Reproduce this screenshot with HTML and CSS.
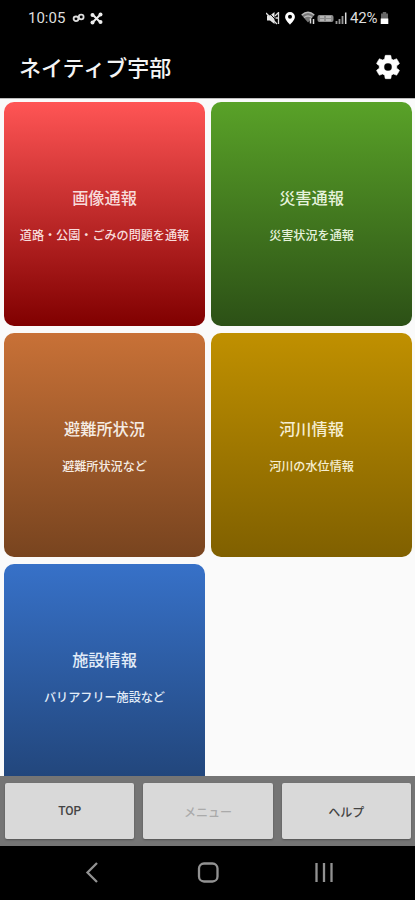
FILE: index.html
```html
<!DOCTYPE html>
<html lang="ja">
<head>
<meta charset="utf-8">
<title>ネイティブ宇部</title>
<link rel="stylesheet" href="styles.css">
</head>
<body>
<div class="app">
  <div class="status">
    <span class="clock">10:05</span>
    <svg class="link" width="14" height="12" viewBox="0 0 14 12" fill="none" stroke="#ddd" stroke-width="1.8"><ellipse cx="4" cy="6.800" rx="2.400" ry="2.300"/><ellipse cx="9.200" cy="5" rx="2.400" ry="2.300"/></svg>
    <svg class="cross" width="13" height="13" viewBox="0 0 13 13" fill="none" stroke="#eee"><path stroke-width="2" d="M2.500 2.500l8 8M10.500 2.500l-8 8"/><g fill="#eee" stroke="none"><circle cx="2.500" cy="3" r="2"/><circle cx="10.500" cy="2.500" r="2"/><circle cx="2.500" cy="10.500" r="2"/><circle cx="10.500" cy="10" r="2"/></g></svg>
    <div class="indicators">
      <svg class="mute" width="14" height="14" viewBox="0 0 14 14"><path fill="#e6e6e6" d="M1 4.500h3L8.500 1v12L4 9.500H1z"/><path d="M1.500 0l11 12" stroke="#000" stroke-width="1"/><path d="M0 2l11 11M9 5l3-3M9.500 7h2.500M12.500 1v12" stroke="#ddd" stroke-width="1.300"/></svg>
      <svg class="pin" width="12" height="14" viewBox="0 0 12 14"><path fill="#fff" fill-rule="evenodd" d="M6 1a4.900 4.900 0 0 0-4.900 4.900C1.100 9 6 13.500 6 13.500S10.900 9 10.900 5.900A4.900 4.900 0 0 0 6 1zm0 2.800a2 2 0 1 1 0 4 2 2 0 0 1 0-4z"/></svg>
      <svg class="wifi" width="15" height="14" viewBox="0 0 15 14"><path fill="#777" d="M.5 4Q7-1.500 13.500 4L7 11.500z"/><path fill="none" stroke="#bbb" stroke-width="1.300" d="M.7 4Q7-1.500 13.300 4M3 6.500q4-3 8 0"/><path fill="none" stroke="#ddd" stroke-width="1.500" d="M9.500 7.500v5M12.500 13V8"/></svg>
      <svg class="volte" width="17" height="9" viewBox="0 0 17 9"><rect x=".5" y="1" width="16" height="7" rx="2" fill="#8d8d8d"/><path d="M3 3h4M3 6h4M9 3h5M9 6h5" stroke="#ddd" stroke-width="1"/></svg>
      <svg class="signal" width="12" height="12" viewBox="0 0 12 12"><path d="M1.500 12V9M4.500 12V7M7.500 12V4" stroke="#999" stroke-width="1.800"/><path d="M10.700 12V.5" stroke="#ddd" stroke-width="1.500"/></svg>
      <span class="percent">42%</span>
      <svg class="battery" width="9" height="13" viewBox="0 0 9 13"><path fill="#666" d="M2.800 0h3.400v1.500H8V7H1V1.500h1.800z"/><path fill="#fff" d="M.7 6.500h7.600V12H.7z"/></svg>
    </div>
  </div>
  <header class="bar">
    <h1>ネイティブ宇部</h1>
    <svg class="gear" width="28" height="28" viewBox="0 0 24 24"><path fill="#fff" stroke="#fff" stroke-width=".5" d="M19.430 12.980c.04-.32.070-.64.070-.98s-.03-.66-.07-.98l2.110-1.650c.19-.15.240-.42.120-.64l-2-3.460c-.12-.22-.39-.3-.61-.22l-2.490 1c-.52-.4-1.080-.73-1.690-.98l-.38-2.650A.488.488 0 0 0 14 2h-4c-.25 0-.46.180-.49.420l-.38 2.650c-.61.250-1.170.590-1.690.980l-2.490-1c-.23-.09-.49 0-.61.220l-2 3.460c-.13.220-.07.490.120.640l2.110 1.650c-.04.320-.07.650-.07.980s.03.660.070.980l-2.110 1.650c-.19.150-.24.420-.12.640l2 3.460c.12.220.39.300.61.220l2.490-1c.52.400 1.080.730 1.690.980l.38 2.650c.03.240.24.420.49.420h4c.25 0 .46-.18.490-.42l.38-2.650c.61-.25 1.170-.59 1.690-.98l2.490 1c.23.090.49 0 .61-.22l2-3.460c.12-.22.070-.49-.12-.64zM12 15.500a3.500 3.500 0 1 1 0-7 3.500 3.500 0 0 1 0 7z"/></svg>
  </header>
  <main class="grid">
    <section class="card red"><h2>画像通報</h2><p>道路・公園・ごみの問題を通報</p></section>
    <section class="card green"><h2>災害通報</h2><p>災害状況を通報</p></section>
    <section class="card brown"><h2>避難所状況</h2><p>避難所状況など</p></section>
    <section class="card gold"><h2>河川情報</h2><p>河川の水位情報</p></section>
    <section class="card blue"><h2>施設情報</h2><p>バリアフリー施設など</p></section>
  </main>
  <footer class="tabs">
    <button>TOP</button>
    <button disabled>メニュー</button>
    <button>ヘルプ</button>
  </footer>
  <nav class="system">
    <svg width="24" height="24" viewBox="0 0 24 24"><path d="M17 3L7.500 12.500 17 22"/></svg>
    <svg width="24" height="24" viewBox="0 0 24 24"><rect x="3" y="3.500" width="18.500" height="18" rx="5"/></svg>
    <svg width="24" height="24" viewBox="0 0 24 24"><path d="M4.500 3v19M12 3v19M19.500 3v19"/></svg>
  </nav>
</div>
</body>
</html>
```
FILE: styles.css
```css
* { box-sizing: border-box; }

body {
  margin: 0;
  background: #000;
  font-family: Roboto, "Noto Sans CJK JP", sans-serif;
}

.app {
  width: 415px;
  height: 900px;
  display: flex;
  flex-direction: column;
  overflow: hidden;
}

.status {
  height: 36px;
  flex: none;
  display: flex;
  align-items: center;
  padding: 0 26px 0 28px;
  color: #dedede;
  font-size: 15px;
}

.clock { width: 38px; }
.link { margin-left: 6px; }
.cross { margin-left: 4px; }

.indicators {
  margin-left: auto;
  display: flex;
  align-items: center;
}

.pin { margin-left: 4px; }
.wifi { margin-left: 5px; }
.volte { margin-left: 1px; }
.signal { margin-left: 1px; }
.percent { margin-left: 3px; width: 29px; font-size: 15px; letter-spacing: -0.2px; }
.battery { margin-left: 1px; }

.bar {
  height: 62px;
  flex: none;
  display: flex;
  align-items: center;
  justify-content: space-between;
  padding: 0 13px 0 19px;
}

.bar h1 {
  margin: 0;
  padding-top: 3px;
  color: #f4f4f4;
  font-size: 22px;
  font-weight: 500;
  line-height: 30px;
}

.grid {
  height: 678px;
  flex: none;
  display: grid;
  grid-template-columns: 201px 201px;
  grid-auto-rows: 224px;
  gap: 7px 6px;
  padding: 3px 4px 4px;
  overflow: hidden;
  background: #fafafa;
  border-top: 1px solid #bbb;
}

.card {
  border-radius: 10px;
  padding-top: 85px;
  text-align: center;
  color: #f5ece4;
}

.card h2 {
  margin: 0;
  font-size: 16.2px;
  line-height: 24px;
  font-weight: 500;
}

.card p {
  margin: 15px 0 0;
  font-size: 12.1px;
  line-height: 20px;
  font-weight: 500;
}

.red { background: linear-gradient(#ff5555, #800000); color: #f8dcdc; }
.green { background: linear-gradient(#59a228, #2c5016); color: #e6f2dc; }
.brown { background: linear-gradient(#c87137, #78441f); }
.gold { background: linear-gradient(#c09000, #806000); color: #f6eed2; }
.blue { background: linear-gradient(#3771c8, #214478); color: #e2ecf8; }

.tabs {
  height: 70px;
  flex: none;
  display: grid;
  grid-template-columns: repeat(3, 1fr);
  gap: 9px;
  padding: 7px 4px 7px 5px;
  background: #757575;
}

.tabs button {
  border: 0;
  border-radius: 2px;
  background: #d9d9d9;
  box-shadow: 0 1px 2px rgba(0, 0, 0, 0.3);
  color: #444;
  font: 500 12px Roboto, "Noto Sans CJK JP", sans-serif;
}

.tabs button:disabled { color: #aaa; }

.system {
  height: 54px;
  flex: none;
  display: flex;
  align-items: center;
  justify-content: space-between;
  padding: 0 79px 2px 80px;
}

.system svg {
  fill: none;
  stroke: #929292;
  stroke-width: 2.3;
}
```
